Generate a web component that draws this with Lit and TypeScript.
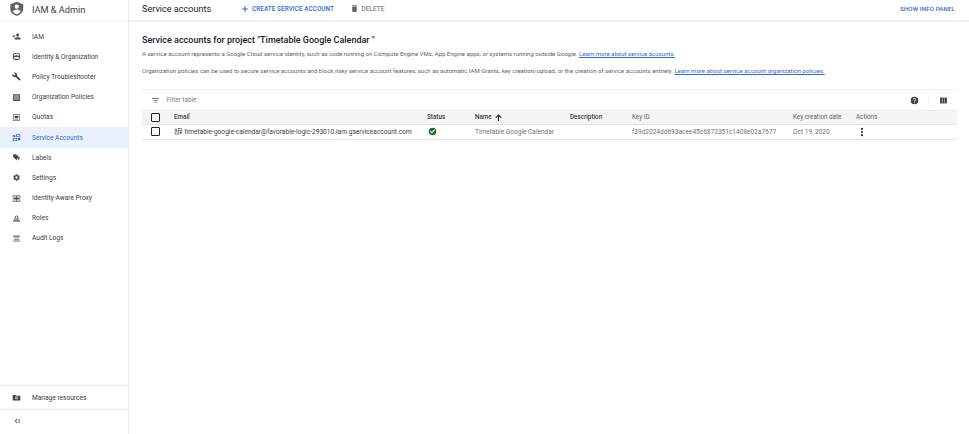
import { LitElement, html, css, svg } from "lit";
import { customElement } from "lit/decorators.js";

const P: Record<string, any> = {
  iam: svg`<path d="M15 12c2.200 0 4-1.800 4-4s-1.800-4-4-4-4 1.800-4 4 1.800 4 4 4zm-9-2V7H4v3H1v2h3v3h2v-3h3v-2H6zm1 10h16v-2c0-2.700-5.300-4-8-4s-8 1.300-8 4z"/>`,
  identity: svg`<path fill-rule="evenodd" d="M12 2a10 10 0 100 20 10 10 0 000-20zm0 2.300a7.700 7.700 0 017.400 5.700H15a3.200 3.200 0 00-6 0H4.600A7.700 7.700 0 0112 4.300zM4.500 13h15a7.700 7.700 0 01-15 0z"/>`,
  wrench: svg`<path d="M22.700 19l-9.100-9.100c.9-2.300.4-5-1.500-6.900-2-2-5-2.400-7.400-1.300L9 6 6 9 1.600 4.700C.4 7.100.9 10.100 2.900 12.100c1.900 1.900 4.600 2.400 6.900 1.500l9.100 9.100c.4.400 1 .4 1.400 0l2.300-2.300c.5-.4.500-1.100.1-1.400z"/>`,
  policies: svg`<path fill-rule="evenodd" d="M3 3h18v18H3zm3 3v12h12V6z"/><path d="M6 6h12v12H6z" opacity=".6"/>`,
  quotas: svg`<path fill-rule="evenodd" d="M3 3h18v18H3zm2 2v14h14V5z" opacity=".8"/><path d="M7 7h10v6.500H7zM7 15.500h10V17H7z"/>`,
  sa: svg`<path fill-rule="evenodd" d="M11 3h11v8H11zm2 2v4h7V5zM2 13h12v8H2zm2 2v4h8v-4zM16 13h6v6h-6zM2 5h7v2H4v4H2z"/><path d="M5 8h4v3H5z"/>`,
  labels: svg`<path d="M3 3h7.500l8 8-7 7.500-8.500-8z"/><path d="M13 5l8.500 8.500-5.500 6.500-1.700-1.600 4-5-6.500-6.500z"/>`,
  settings: svg`<g transform="translate(12 12) scale(.88) translate(-12 -12)"><path d="M19.400 13c0-.3.1-.6.1-1s0-.7-.1-1l2.100-1.600c.2-.2.2-.4.1-.6l-2-3.500c-.1-.2-.4-.3-.6-.2l-2.500 1c-.5-.4-1.100-.7-1.700-1l-.4-2.600c0-.3-.2-.5-.5-.5h-4c-.3 0-.5.200-.5.400l-.4 2.700c-.6.200-1.200.6-1.700 1l-2.500-1c-.2-.1-.5 0-.6.2l-2 3.500c-.1.200-.1.500.1.600L4.600 11c0 .3-.1.600-.1 1s0 .7.1 1l-2.100 1.600c-.2.200-.2.400-.1.600l2 3.500c.1.200.4.300.6.200l2.500-1c.5.400 1.100.7 1.700 1l.4 2.600c0 .3.200.5.500.5h4c.3 0 .5-.2.500-.4l.4-2.700c.6-.2 1.200-.6 1.700-1l2.500 1c.2.100.5 0 .6-.2l2-3.500c.1-.2.100-.5-.1-.6zM12 15.500a3.500 3.500 0 110-7 3.500 3.500 0 010 7z"/></g>`,
  iap: svg`<path fill-rule="evenodd" d="M2 3h20v18H2zm2 2v14h16V5z" opacity=".75"/><path d="M4 5h16v14H4z" opacity=".28"/><path d="M11 5h2v14h-2zM5.500 10.800h3V8l3 4-3 4v-2.800h-3zM18.500 10.800h-3V8l-3 4 3 4v-2.800h3z"/>`,
  roles: svg`<path fill-rule="evenodd" d="M12 4a4.500 4.500 0 014.500 4.500V11h-2.200V8.500a2.300 2.300 0 00-4.600 0V11H7.500V8.500A4.500 4.500 0 0112 4z"/><path d="M5 12h14v2.500H5zM3 16.500h18V20H3z"/>`,
  audit: svg`<g opacity=".8"><path d="M3 4h18v3H3zM5 9h14v2H5zM5 13h14v2H5zM3 17h18v3H3z"/></g>`,
  manage: svg`<path fill-rule="evenodd" d="M2 5h7l2 2h11v13H2zm10 4.500a3.500 3.500 0 100 7 3.500 3.500 0 000-7z"/><circle cx="12" cy="13" r="1.700"/>`,
  collapse: svg`<path d="M12 5L5 12l7 7 1.800-1.800L8.600 12l5.200-5.200zM17 5h2.500v14H17z"/>`,
  plus: svg`<path d="M19 13.200h-5.800V19h-2.400v-5.800H5v-2.400h5.800V5h2.400v5.800H19z"/>`,
  trash: svg`<path d="M6 19c0 1.100.9 2 2 2h8c1.100 0 2-.9 2-2V7H6zM19 4h-3.500l-1-1h-5l-1 1H5v2h14z"/>`,
  filter: svg`<path d="M3 6h18v2.200H3zM7 11h10v2.200H7zM10 16h4v2.200h-4z"/>`,
  help: svg`<path fill-rule="evenodd" d="M12 2a10 10 0 100 20 10 10 0 000-20zm1 17h-2v-2h2zm2.100-7.700l-.9.900c-.7.700-1.200 1.300-1.200 2.800h-2v-.5c0-1.100.5-2.100 1.200-2.800l1.200-1.300c.4-.3.600-.8.600-1.400a2 2 0 00-4 0H8a4 4 0 018 0c0 .9-.4 1.700-.9 2.300z"/>`,
  columns: svg`<path d="M3 4h5.400v16H3zM9.500 4h5v16h-5zM15.600 4H21v16h-5.400z"/>`,
  up: svg`<path d="M3.500 12l1.900 1.900 5.100-5.100V21h3V8.800l5.100 5.100 1.900-1.900L12 3.500z"/>`,
  more: svg`<circle cx="12" cy="4.500" r="2.500"/><circle cx="12" cy="12" r="2.500"/><circle cx="12" cy="19.500" r="2.500"/>`,
  check: svg`<path fill-rule="evenodd" d="M12 2a10 10 0 100 20 10 10 0 000-20zm-2 15l-5-5 1.900-1.900 3.100 3.100 7.100-7.100L19 8z"/>`,
  shield: svg`<path fill-rule="evenodd" d="M12 1L2 5v7c0 5.200 4.200 9.700 10 11 5.800-1.300 10-5.800 10-11V5zm0 4.500a3.300 3.300 0 110 6.600 3.300 3.300 0 010-6.600zm-6 11c0-2.200 4-3.300 6-3.300s6 1.100 6 3.300c-1.400 1.900-3.600 3.300-6 3.900-2.400-.6-4.600-2-6-3.900z"/>`,
};

const icon = (name: string, cls = "") =>
  html`<svg class="ic ${cls}" viewBox="0 0 24 24" fill="currentColor">${P[name]}</svg>`;

const NAV: [string, string][] = [
  ["iam", "IAM"],
  ["identity", "Identity & Organization"],
  ["wrench", "Policy Troubleshooter"],
  ["policies", "Organization Policies"],
  ["quotas", "Quotas"],
  ["sa", "Service Accounts"],
  ["labels", "Labels"],
  ["settings", "Settings"],
  ["iap", "Identity-Aware Proxy"],
  ["roles", "Roles"],
  ["audit", "Audit Logs"],
];

@customElement("app-root")
export class AppRoot extends LitElement {
  static styles = css`
    :host {
      display: flex;
      width: 969px;
      height: 434px;
      overflow: hidden;
      background: #fff;
      color: #3c4043;
      font-family: Roboto, "Liberation Sans", sans-serif;
      font-size: 6.6px;
    }
    .ic { width: 9px; height: 9px; flex: none; display: block; }
    a { color: #3367d6; text-decoration: underline; }

    .side {
      width: 129px;
      flex: none;
      box-sizing: border-box;
      border-right: 1px solid #e8e8e8;
      display: flex;
      flex-direction: column;
    }
    .brand {
      height: 21px;
      box-sizing: border-box;
      border-bottom: 1px solid #eee;
      display: flex;
      align-items: center;
      gap: 8px;
      padding: 0 0 2px 8.500px;
      font-size: 9.200px;
      color: #3c4043;
      flex: none;
    }
    .brand .ic { width: 15.500px; height: 15.500px; color: #5f6368; }
    nav { padding-top: 5.500px; flex: 1; }
    .item {
      height: 20.200px;
      display: flex;
      align-items: center;
      gap: 11.500px;
      padding-left: 11.500px;
    }
    .item.on { background: #eaf1fd; color: #3367d6; }
    .item .ic { color: #4a4a4a; }
    .item.on .ic { color: #3367d6; }
    .foot {
      border-top: 1px solid #e4e4e4;
      height: 24px;
      box-sizing: border-box;
      display: flex;
      align-items: center;
      gap: 11.500px;
      padding-left: 11.500px;
      flex: none;
    }
    .foot .ic { color: #424242; }
    .foot.last { height: 25px; padding: 0 0 2px 12.500px; }
    .foot.last .ic { width: 8px; height: 8px; }

    main { flex: 1; min-width: 0; display: flex; flex-direction: column; }
    .bar {
      height: 22px;
      box-sizing: border-box;
      border-bottom: 2px solid #f1f1f1;
      display: flex;
      align-items: center;
      padding: 0 14px 3px 13px;
      flex: none;
    }
    .bar h1 { margin: 0; font-size: 9.100px; font-weight: 400; width: 98px; color: #202124; }
    .btn {
      display: flex;
      align-items: center;
      gap: 2px;
      font-size: 6.300px;
      font-weight: 500;
      letter-spacing: .1px;
      color: #3367d6;
    }
    .btn .ic { width: 10px; height: 10px; }
    .btn.off { color: #80868b; margin-left: 16px; gap: 2.500px; font-size: 6.400px; }
    .btn.off .ic { color: #5f6368; width: 9px; height: 9px; }
    .btn.info { margin-left: auto; font-size: 6.200px; }

    .content { padding: 13px 12px 0 13px; }
    h2 { margin: 0 0 4px; font-size: 9px; font-weight: 500; color: #202124; height: 11px; line-height: 11px; }
    p { margin: 0; font-size: 6.060px; height: 8px; line-height: 8px; color: #5f6368; white-space: nowrap; }
    p + p { margin-top: 9px; }

    .filter {
      margin-top: 14px;
      height: 21px;
      box-sizing: border-box;
      border-top: 1px solid #f0f0f0;
      display: flex;
      align-items: center;
      padding: 0 9px 0 8.500px;
      color: #80868b;
      font-size: 6.400px;
    }
    .filter .ic { color: #424242; }
    .filter .lab { margin-left: 7px; flex: 1; }
    .filter .sep { width: 1px; height: 11px; background: #eee; margin: 0 10px 0 9px; }

    .grid {
      display: grid;
      grid-template-columns: 32px 253px 48px 95px 62px 161px 63px 1fr;
      font-size: 6.300px;
    }
    .cell {
      height: 14.500px;
      display: flex;
      align-items: center;
      white-space: nowrap;
      box-sizing: border-box;
    }
    .hd { background: #f5f5f5; font-weight: 500; color: #3c4043; border-top: 1px solid #eee; border-bottom: 1px solid #e4e4e4; }
    .hd.lt { font-weight: 400; color: #5f6368; }
    .rw { border-bottom: 1px solid #e4e4e4; color: #6f7377; height: 15px; font-size: 6.550px; }
    .cb { padding-left: 9px; }
    .box { width: 7px; height: 7px; border: 1.100px solid #202124; border-radius: 1px; }
    .em { color: #3c4043; gap: 2px; font-size: 6.600px; }
    .em .ic { width: 8.500px; height: 8.500px; color: #5f6368; }
    .up { color: #202124; margin-left: 2px; }
    .ok { color: #137333; margin-left: 1px; }
    .more { width: 10px; height: 10px; color: #202124; margin-left: 1px; }
  `;

  render() {
    return html`
      <aside class="side">
        <div class="brand">${icon("shield")}<span>IAM &amp; Admin</span></div>
        <nav>
          ${NAV.map(
            ([i, t]) => html`<div class="item ${t === "Service Accounts" ? "on" : ""}">${icon(i)}<span>${t}</span></div>`
          )}
        </nav>
        <div class="foot">${icon("manage")}<span>Manage resources</span></div>
        <div class="foot last">${icon("collapse")}</div>
      </aside>
      <main>
        <div class="bar">
          <h1>Service accounts</h1>
          <div class="btn">${icon("plus")}<span>CREATE SERVICE ACCOUNT</span></div>
          <div class="btn off">${icon("trash")}<span>DELETE</span></div>
          <div class="btn info"><span>SHOW INFO PANEL</span></div>
        </div>
        <div class="content">
          <h2>Service accounts for project "Timetable Google Calendar "</h2>
          <p>A service account represents a Google Cloud service identity, such as code running on Compute Engine VMs, App Engine apps, or systems running outside Google. <a>Learn more about service accounts.</a></p>
          <p>Organization policies can be used to secure service accounts and block risky service account features, such as automatic IAM Grants, key creation/upload, or the creation of service accounts entirely. <a>Learn more about service account organization policies.</a></p>
          <div class="filter">
            ${icon("filter")}<span class="lab">Filter table</span>${icon("help")}<span class="sep"></span>${icon("columns")}
          </div>
          <div class="grid">
            <div class="cell hd cb"><span class="box"></span></div>
            <div class="cell hd">Email</div>
            <div class="cell hd">Status</div>
            <div class="cell hd">Name ${icon("up", "up")}</div>
            <div class="cell hd">Description</div>
            <div class="cell hd lt">Key ID</div>
            <div class="cell hd lt">Key creation date</div>
            <div class="cell hd lt">Actions</div>

            <div class="cell rw cb"><span class="box"></span></div>
            <div class="cell rw em">${icon("sa")}<span>timetable-google-calendar@favorable-logic-293010.iam.gserviceaccount.com</span></div>
            <div class="cell rw">${icon("check", "ok")}</div>
            <div class="cell rw">Timetable Google Calendar</div>
            <div class="cell rw"></div>
            <div class="cell rw">f39d2024dd693acee45c6872351c1408e02a7677</div>
            <div class="cell rw">Oct 19, 2020</div>
            <div class="cell rw">${icon("more", "more")}</div>
          </div>
        </div>
      </main>
    `;
  }
}
